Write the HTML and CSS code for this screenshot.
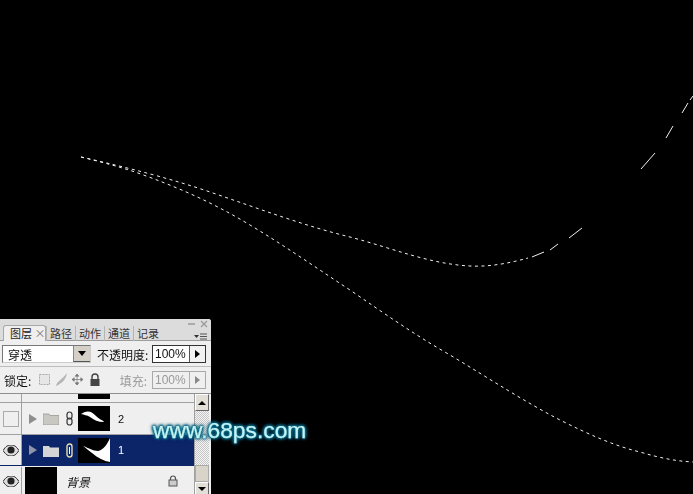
FILE: index.html
```html
<!DOCTYPE html>
<html lang="zh">
<head>
<meta charset="utf-8">
<title>图层</title>
<link rel="stylesheet" href="styles.css">
</head>
<body>
<svg class="canvas" width="693" height="494" viewBox="0 0 693 494">
  <path class="ants" d="M81 157 C130 168 175 180 210 192 C260 209 305 226 350 237 C395 249 430 264 470 266 C490 267 510 263 528 258"/>
  <path class="ants" d="M81 157 C105 163 120 167 135 172 C175 186 212 202 250 225 C285 246 315 267 350 290 C385 314 415 335 450 355 C490 379 525 402 560 420 C590 435 615 446 640 452 C660 458 675 461 693 462"/>
  <path class="dash" d="M532 257 L544 252 M550 250 L558 244 M569 238 L582 228 M641 169 L655 153 M666 138 L673 126 M682 113 L688 103 M690 100 L693 96"/>
</svg>

<section class="panel">
  <div class="titlebar">
    <div class="tabs">
      <span class="tab active">图层 <i class="close">×</i></span>
      <span class="tab">路径</span>
      <span class="tab">动作</span>
      <span class="tab">通道</span>
      <span class="tab">记录</span>
    </div>
    <div class="winbtns">
      <svg width="26" height="21" viewBox="0 0 26 21">
        <path d="M3 4h7" stroke="#9a9a9a" stroke-width="1.5"/>
        <path d="M16 1l6 6M22 1l-6 6" stroke="#9a9a9a" stroke-width="1.3"/>
        <path d="M9 15h5l-2.500 3z" fill="#333"/>
        <path d="M15 14h7M15 16.500h7M15 19h7" stroke="#555"/>
      </svg>
    </div>
  </div>

  <div class="optrow">
    <div class="select"><span class="selval">穿透</span><span class="selbtn"><b class="tri-down"></b></span></div>
    <span class="label optlabel">不透明度:</span>
    <div class="field"><span class="val">100%</span><span class="arrow"><b class="tri-right"></b></span></div>
  </div>

  <div class="lockrow">
    <span class="label">锁定:</span>
    <svg class="lockicons" width="64" height="16" viewBox="0 0 64 16">
      <rect x="1.500" y="2.500" width="10" height="10" fill="#e6e6e6" stroke="#aaa" stroke-dasharray="2 1"/>
      <path d="M18 14 C19 9 24 8 29 1 C28 8 23 12 18 14z" fill="#b5b5b5"/>
      <path d="M39 2v11M34 7.500h11M39 2l-1.800 2.200h3.600zM39 13l-1.800-2.200h3.600zM34 7.500l2.200-1.800v3.600zM45 7.500l-2.200-1.800v3.600z" fill="#777" stroke="#777" stroke-width=".7"/>
      <path d="M54 7V5a3 3 0 0 1 6 0v2" fill="none" stroke="#444" stroke-width="1.400"/>
      <rect x="52.500" y="7" width="9" height="7" fill="#444"/>
    </svg>
    <span class="label dim">填充:</span>
    <div class="field dim"><span class="val">100%</span><span class="arrow"><b class="tri-right"></b></span></div>
  </div>

  <div class="layers">
    <div class="list">
      <div class="row stub"><span class="eye"></span><span class="content"><span class="thumb-stub"></span></span></div>

      <div class="row group">
        <span class="eye"><span class="emptybox"></span></span>
        <span class="content">
          <b class="tri-layer"></b>
          <svg class="folder" width="16" height="13" viewBox="0 0 16 13"><path d="M0 2h6l1 1.500h9V13H0z" fill="#c9c7c2" stroke="#9a9893" stroke-width=".8"/></svg>
          <svg class="link" width="7" height="15" viewBox="0 0 7 15"><rect x="1" y="1" width="5" height="7" rx="2.500" fill="none" stroke="#333" stroke-width="1.200"/><rect x="1" y="7" width="5" height="7" rx="2.500" fill="none" stroke="#333" stroke-width="1.200"/></svg>
          <svg class="thumb" width="32" height="25" viewBox="0 0 32 25"><rect width="32" height="25" fill="#000"/><path d="M3 8 C10 3 14 6 18 10 C22 14 25 14 26 16 C20 16 16 14 12 11 C9 9 6 9 3 8z" fill="#fff"/></svg>
          <span class="name">2</span>
        </span>
      </div>

      <div class="row group selected">
        <span class="eye"><svg width="16" height="11" viewBox="0 0 16 11"><path d="M0 5.500C3 1 5 0 8 0s5 1 8 5.500C13 10 11 11 8 11S3 10 0 5.500z" fill="#ddd" stroke="#333"/><circle cx="8" cy="5" r="3.600" fill="#222"/></svg></span>
        <span class="content">
          <b class="tri-layer"></b>
          <svg class="folder" width="16" height="13" viewBox="0 0 16 13"><path d="M0 2h6l1 1.500h9V13H0z" fill="#d5d5d8"/></svg>
          <svg class="link" width="7" height="15" viewBox="0 0 7 15"><rect x="1" y="1" width="5" height="13" rx="2.500" fill="#0c2468" stroke="#e4dfa8" stroke-width="1.400"/><path d="M3.500 4v7" stroke="#fff"/></svg>
          <svg class="thumb" width="32" height="25" viewBox="0 0 32 25"><rect width="32" height="25" fill="#000"/><path d="M5 8 C11 10 15 13 20 13 C25 12 29 7 32 0 V24 C26 23 20 20 14 15 C10 12 8 10 5 8z" fill="#fff"/></svg>
          <span class="name">1</span>
        </span>
      </div>

      <div class="row bg">
        <span class="eye"><svg width="16" height="11" viewBox="0 0 16 11"><path d="M0 5.500C3 1 5 0 8 0s5 1 8 5.500C13 10 11 11 8 11S3 10 0 5.500z" fill="#ddd" stroke="#333"/><circle cx="8" cy="5" r="3.600" fill="#222"/></svg></span>
        <span class="content">
          <span class="bgthumb"></span>
          <span class="bgname">背景</span>
          <svg class="baselock" width="10" height="12" viewBox="0 0 10 12"><path d="M2.500 5V3.500a2.500 2.500 0 0 1 5 0V5" fill="none" stroke="#555" stroke-width="1.200"/><rect x="1" y="5" width="8" height="6" fill="#ccc" stroke="#555"/></svg>
        </span>
      </div>
    </div>

    <div class="scroll">
      <span class="sbtn"><b class="tri-up"></b></span>
      <span class="strack"></span>
      <span class="sthumb"></span>
      <span class="sbtn clipped"><b class="tri-small-down"></b></span>
    </div>
  </div>
</section>

<div class="watermark">www.68ps.com</div>
</body>
</html>
```
FILE: styles.css
```css
html, body { margin: 0; padding: 0; }
body {
  width: 693px; height: 494px; overflow: hidden;
  background: #000; position: relative;
  font-family: "Noto Sans CJK SC", "Liberation Sans", sans-serif;
}
.canvas { position: absolute; left: 0; top: 0; display: block; }
.ants { fill: none; stroke: #f2f2f2; stroke-width: 1; stroke-dasharray: 3 3.500; }
.dash { fill: none; stroke: #f0f0f0; stroke-width: 1; }

.panel {
  position: absolute; left: 0; top: 319px;
  width: 211px; height: 175px; overflow: hidden;
  background: #efefef; color: #111;
  font-size: 12px; display: flex; flex-direction: column;
  border-radius: 0 3px 0 0;
  filter: blur(.3px);
}
.titlebar {
  height: 22px; display: flex; justify-content: space-between;
  background: #dcdcdc; border-bottom: 1px solid #9c9c9c; box-sizing: border-box;
  flex: none;
}
.tabs { display: flex; padding: 7px 0 0 3px; font-size: 11px; }
.tab {
  width: 29px; box-sizing: border-box; height: 15px; line-height: 15px; text-align: center;
  color: #333; white-space: nowrap;
  border-left: 1px solid #b4b4b4;
}
.tab.active {
  width: 43px; text-align: left;
  background: #efefef; border: 1px solid #a8a8a8; border-bottom: 0;
  border-radius: 3px 3px 0 0; padding: 0 0 0 6px; color: #222; margin-top: -1px; height: 16px;
}
.close { font-style: normal; color: #777; }
.winbtns { padding: 1px 0 0; width: 26px; }
.winbtns svg { display: block; }

.optrow {
  height: 26px; flex: none; box-sizing: border-box;
  display: flex; align-items: center; padding: 1px 5px 0 2px;
  border-bottom: 1px solid #bdbdbd;
}
.select {
  width: 89px; height: 18px; box-sizing: border-box; background: #fff;
  border: 1px solid #777; border-right-color: #ccc; border-bottom-color: #ccc;
  display: flex; justify-content: space-between;
}
.selval { padding-left: 5px; line-height: 17px; font-size: 12px; }
.selbtn {
  width: 16px; background: #d4d0c8; border-left: 1px solid #888; border-bottom: 1px solid #555;
  display: flex; align-items: center; justify-content: center;
}
.tri-down { border: 4px solid transparent; border-top: 5px solid #000; border-bottom: 0; }
.label { white-space: nowrap; font-size: 12px; }
.optlabel { margin-left: 6px; }
.label.dim { color: #999; margin-left: auto; }
.field {
  width: 54px; height: 18px; box-sizing: border-box; background: #fff; flex: none;
  border: 1px solid #333; display: flex; justify-content: space-between; margin-left: auto;
}
.val { font-family: "Liberation Sans", sans-serif; font-size: 12px; line-height: 16px; padding-left: 2px; }
.arrow { width: 15px; border-left: 1px solid #555; display: flex; align-items: center; justify-content: center; background: #f2f2f2; }
.tri-right { border: 4px solid transparent; border-left: 5px solid #000; border-right: 0; }
.field.dim { border-color: #a8a8a8; background: #efefef; color: #999; margin-left: 5px; }
.field.dim .arrow { border-color: #b0b0b0; background: #efefef; }
.field.dim .tri-right { border-left-color: #888; }

.lockrow {
  height: 27px; flex: none; box-sizing: border-box;
  display: flex; align-items: center; padding: 0 5px 0 4px;
  border-bottom: 1px solid #8f8f8f;
}
.lockicons { flex: none; margin-left: 7px; }

.layers { flex: 1; display: flex; min-height: 0; padding-right: 2px; background: #efefef; }
.list { width: 194px; flex: none; display: flex; flex-direction: column; }
.row { display: flex; flex: none; border-bottom: 1px solid #a0a0a0; box-sizing: border-box; }
.eye {
  width: 22px; flex: none; box-sizing: border-box; border-right: 1px solid #a0a0a0;
  display: flex; align-items: center; justify-content: center;
}
.content { flex: 1; display: flex; align-items: center; min-width: 0; }
.stub { height: 9px; }
.stub .content { align-items: flex-start; padding-left: 56px; }
.thumb-stub { width: 32px; height: 5px; background: #000; }
.group { height: 32px; }
.emptybox { width: 14px; height: 14px; border: 1px solid #aaa; background: #efefef; display: block; }
.tri-layer { border: 5px solid transparent; border-left: 8px solid #8e8e8e; border-right: 0; margin-left: 7px; }
.folder { margin-left: 6px; }
.link { margin-left: 7px; }
.thumb { margin-left: 5px; }
.name { margin-left: 8px; font-family: "Liberation Sans", sans-serif; font-size: 11px; }
.selected { background: #0c2468; height: 31px; color: #fff; border-bottom-color: #0c2468; }
.selected .eye { background: #efefef; }
.selected .tri-layer { border-left-color: #9095a8; }
.bg { height: 29px; border: 0; padding-top: 1px; }
.bgthumb { width: 32px; height: 28px; background: #000; margin-left: 3px; flex: none; align-self: flex-start; }
.bgname { margin-left: 9px; font-style: italic; font-size: 12px; }
.baselock { margin-left: auto; margin-right: 16px; }

.scroll {
  flex: 1; display: flex; flex-direction: column;
  background: repeating-conic-gradient(#c6c6c6 0 25%, #f4f4f4 0 50%) 0 0 / 2px 2px;
  border-left: 1px solid #a0a0a0;
}
.sbtn {
  height: 17px; flex: none; background: #e2dfd8; border: 1px solid #666; border-top-color: #fff; border-left-color: #fff;
  box-sizing: border-box; display: flex; align-items: center; justify-content: center;
}
.sbtn.clipped { height: 12px; border-bottom: 0; }
.strack { flex: 1; }
.sthumb { height: 17px; flex: none; background: #d8d4ca; border: 1px solid #aaa; box-sizing: border-box; }
.tri-up { border: 4px solid transparent; border-bottom: 4px solid #000; border-top: 0; }
.tri-small-down { border: 4px solid transparent; border-top: 4px solid #000; border-bottom: 0; }

.watermark {
  position: absolute; left: 153px; top: 416px;
  font-family: "Liberation Sans", sans-serif; font-size: 22.800px; line-height: 28px;
  color: #c4f3f5; white-space: nowrap;
  -webkit-text-stroke: .25px #c4f3f5;
  text-shadow: 0 0 1px #0d6f86, 0 0 2px #0d6f86, 0 0 3px #0b6a85, 1px 1px 3px #0b5f7e, -1px -1px 3px #0b5f7e, 1px -1px 3px #0b5f7e, -1px 1px 3px #0b5f7e, 0 0 5px #0b5f7e;
}
```
